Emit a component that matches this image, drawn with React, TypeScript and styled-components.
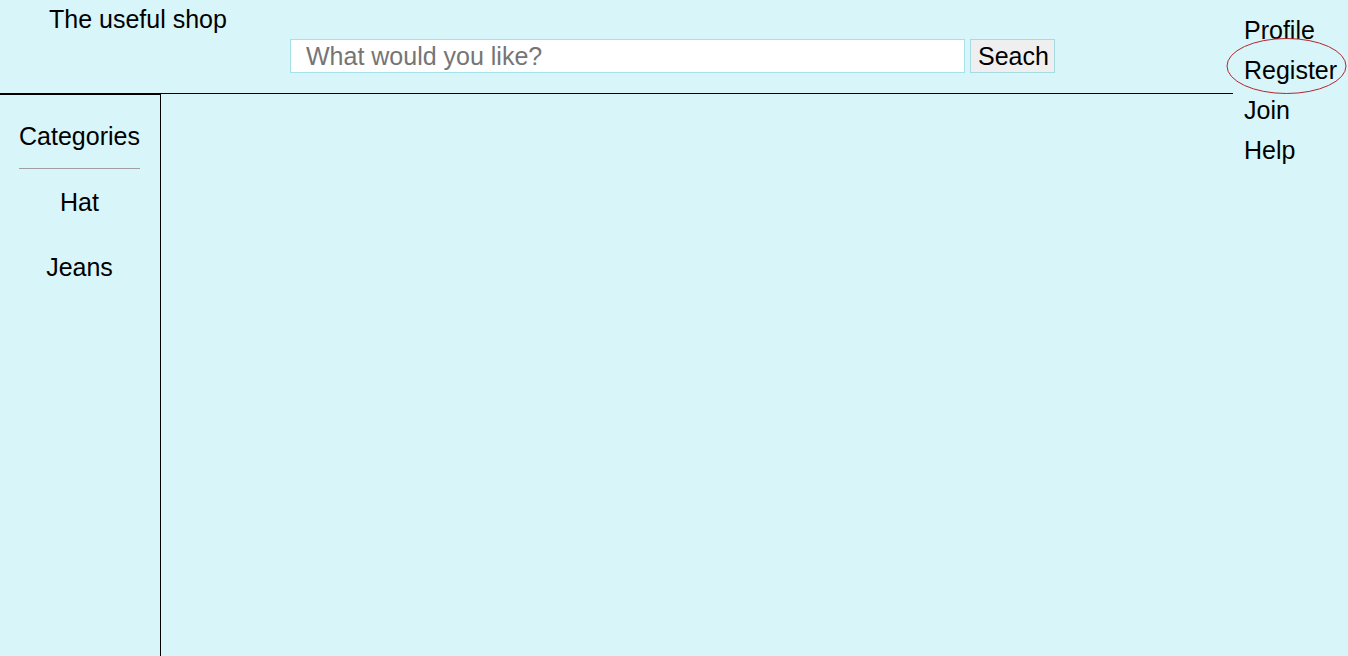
import styled, { createGlobalStyle } from 'styled-components'

const GlobalStyle = createGlobalStyle`
  html, body {
    margin: 0;
    padding: 0;
    height: 100%;
    background: #d8f5f9;
  }
  body {
    font-family: "Liberation Sans", Arial, sans-serif;
    font-size: 25px;
    color: #000;
  }
  #root {
    height: 100%;
  }
`

const categories = ['Hat', 'Jeans']
const links = ['Profile', 'Register', 'Join', 'Help']

export default function App() {
  return (
    <>
      <GlobalStyle />
      <StyledPage>
        <StyledMain>
          <StyledHeader>
            <StyledTitle>The useful shop</StyledTitle>
            <StyledSearch>
              <StyledInput placeholder="What would you like?" />
              <StyledButton>Seach</StyledButton>
            </StyledSearch>
          </StyledHeader>
          <StyledBody>
            <StyledSidebar>
              <h3>Categories</h3>
              <hr />
              {categories.map((c) => (
                <StyledCategory key={c}>{c}</StyledCategory>
              ))}
            </StyledSidebar>
            <StyledContent />
          </StyledBody>
        </StyledMain>
        <StyledNav>
          {links.map((l) => (
            <StyledNavItem key={l}>
              {l}
              {l === 'Register' && (
                <svg className="ring" width="121" height="58" viewBox="0 0 121 58">
                  <ellipse cx="60.5" cy="29" rx="59.5" ry="27.5" fill="none" stroke="#b3262f" strokeWidth="1" />
                </svg>
              )}
            </StyledNavItem>
          ))}
        </StyledNav>
      </StyledPage>
    </>
  )
}

const StyledPage = styled.div`
  display: flex;
  height: 100%;
`

const StyledMain = styled.div`
  flex: 1;
  display: flex;
  flex-direction: column;
  min-width: 0;
`

const StyledHeader = styled.header`
  height: 94px;
  box-sizing: border-box;
  border-bottom: 1px solid #000;
  display: flex;
  flex-direction: column;
`

const StyledTitle = styled.div`
  line-height: 28px;
  padding: 5px 0 0 49px;
`

const StyledSearch = styled.form`
  display: flex;
  gap: 5px;
  margin: 6px 0 0 290px;
  height: 34px;
`

const StyledInput = styled.input`
  width: 675px;
  box-sizing: border-box;
  height: 34px;
  border: 1px solid #a6e2ea;
  background: #fff;
  padding: 0 15px;
  font-family: "Liberation Sans", Arial, sans-serif;
  font-size: 25px;
  outline: none;

  &::placeholder {
    color: #757575;
  }
`

const StyledButton = styled.button`
  height: 34px;
  box-sizing: border-box;
  width: 85px;
  padding: 0 7px;
  border: 1px solid #a6dbe2;
  background: #efefef;
  font-family: "Liberation Sans", Arial, sans-serif;
  font-size: 25px;
  color: #000;
  text-align: left;
`

const StyledBody = styled.div`
  flex: 1;
  display: flex;
`

const StyledSidebar = styled.aside`
  border-top: 1px solid #000;
  border-right: 1px solid #000;
  padding: 27px 20px 0 19px;
  width: 121px;
  text-align: center;

  h3 {
    margin: 0;
    font-weight: normal;
    font-size: 25px;
    line-height: 28px;
    white-space: nowrap;
  }

  hr {
    margin: 18px 0 19px;
    border: none;
    border-top: 1px solid #a0a0a0;
    height: 0;
  }
`

const StyledCategory = styled.div`
  line-height: 28px;
  margin-bottom: 37px;
`

const StyledContent = styled.main`
  flex: 1;
`

const StyledNav = styled.nav`
  width: 115px;
  box-sizing: border-box;
  padding: 10px 0 0 11px;
  display: flex;
  flex-direction: column;
`

const StyledNavItem = styled.div`
  position: relative;
  height: 40px;
  line-height: 40px;
  white-space: nowrap;

  .ring {
    position: absolute;
    left: -18px;
    top: -13px;
    pointer-events: none;
  }
`
